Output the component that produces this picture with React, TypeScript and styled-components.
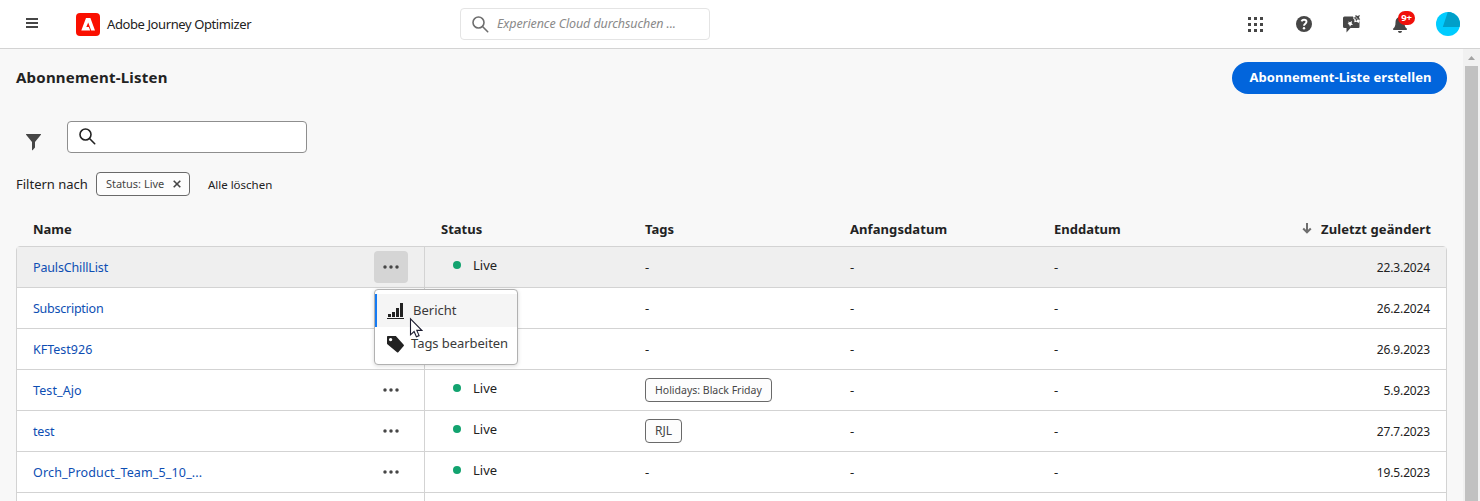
import React from 'react';
import styled, { createGlobalStyle } from 'styled-components';

const GlobalStyle = createGlobalStyle`
  *, *::before, *::after { box-sizing: border-box; }
  body {
    margin: 0;
    overflow: hidden;
    background: #f8f8f8;
    color: #222;
    font-family: "Noto Sans", "Open Sans", sans-serif;
    font-size: 13px;
  }
  button, input { font: inherit; color: inherit; }
  svg { display: block; flex: none; }
`;

const Page = styled.div`
  height: 501px;
  display: flex;
  flex-direction: column;
  overflow: hidden;
`;

const Label = styled.span<{ $ls?: number }>`
  white-space: nowrap;
  letter-spacing: ${(p) => p.$ls ?? 0}px;
`;

/* Top bar */
const TopBar = styled.header`
  flex: none;
  height: 49px;
  display: flex;
  align-items: center;
  background: #fff;
  border-bottom: 1px solid #d3d3d3;
`;

const Brand = styled.div`
  width: 460px;
  display: flex;
  align-items: center;
  padding-left: 26px;
`;

const MenuGlyph = styled.svg`
  margin-bottom: 2px;
`;

const Logo = styled.span`
  margin: 0 7px 0 38px;
`;

const GlobalSearch = styled.label`
  width: 250px;
  height: 32px;
  display: flex;
  align-items: center;
  gap: 8px;
  padding-left: 11px;
  border: 1px solid #e4e4e4;
  border-radius: 4px;
  color: #6e6e6e;
`;

const Placeholder = styled(Label)`
  font-size: 12.5px;
  font-style: italic;
  color: #8a8a8a;
  padding-bottom: 1px;
`;

const Actions = styled.nav`
  margin-left: auto;
  padding-right: 20px;
  display: flex;
  align-items: center;
  color: #464646;
`;

const Action = styled.span<{ $gap: number }>`
  position: relative;
  margin-left: ${(p) => p.$gap}px;
`;

const Badge = styled.span`
  position: absolute;
  left: 5px;
  top: -5px;
  width: 17px;
  height: 14px;
  border-radius: 7px;
  background: #f00f0a;
  color: #fff;
  font-size: 9.5px;
  font-weight: 700;
  line-height: 14px;
  letter-spacing: -0.2px;
  text-align: center;
`;

/* Content */
const Body = styled.div`
  flex: 1;
  min-height: 0;
  display: flex;
`;

const Main = styled.main`
  flex: 1;
  min-width: 0;
  padding: 13px 16px 0;
`;

const Heading = styled.div`
  height: 32px;
  display: flex;
  align-items: center;
  justify-content: space-between;
`;

const Title = styled.h1`
  margin: 0;
  padding-bottom: 2px;
  font-size: 15px;
  font-weight: 700;
  letter-spacing: 0.22px;
`;

const PrimaryButton = styled.button`
  width: 215px;
  height: 32px;
  padding: 0 0 2px 2px;
  border: 0;
  border-radius: 16px;
  background: #0265dc;
  color: #fff;
  font-weight: 700;
  letter-spacing: 0.05px;
`;

const SearchRow = styled.div`
  margin-top: 27px;
  height: 32px;
  display: flex;
  align-items: center;
  padding-left: 10px;
`;

const FilterButton = styled.span`
  margin: 10px 26px 0 0;
  color: #464646;
`;

const SearchField = styled.label`
  width: 240px;
  height: 32px;
  padding: 6px 0 0 11px;
  border: 1px solid #8e8e8e;
  border-radius: 4px;
  background: #fff;
`;

const FilterRow = styled.div`
  margin-top: 19px;
  height: 24px;
  display: flex;
  align-items: center;
`;

const Tag = styled.span<{ $size: number }>`
  display: inline-flex;
  align-items: center;
  height: 24px;
  padding: 0 9px 1px;
  border: 1px solid #6a6a6a;
  border-radius: 4px;
  background: #fdfdfd;
  color: #464646;
  font-size: ${(p) => p.$size}px;
`;

const FilterTag = styled(Tag)`
  width: 94px;
  justify-content: space-between;
  padding-right: 8px;
  margin: 0 18px 0 8px;
`;

const ClearAll = styled(Label)`
  font-size: 11.5px;
  padding-top: 1px;
`;

/* Table */
const columns = '408px 204px 205px 204px 1fr';

const HeaderRow = styled.div`
  margin-top: 16px;
  height: 34px;
  display: grid;
  grid-template-columns: ${columns};
  align-items: center;
  font-weight: 700;
`;

const HeaderCell = styled.div`
  padding-left: 17px;
`;

const HeaderTail = styled.div`
  display: flex;
  align-items: center;
  justify-content: space-between;
  padding: 0 16px 0 17px;
`;

const Sorted = styled.span`
  display: flex;
  align-items: center;
  gap: 9px;
`;

const SortArrow = styled.svg`
  margin-bottom: 2px;
`;

const Table = styled.div`
  border: 1px solid #d3d3d3;
  border-radius: 4px 4px 0 0;
  background: #fff;
`;

const Row = styled.div<{ $active?: boolean }>`
  height: 41px;
  display: grid;
  grid-template-columns: ${columns};
  border-bottom: 1px solid #d3d3d3;
  background: ${(p) => (p.$active ? '#efefef' : 'transparent')};
`;

const Cell = styled.div`
  min-width: 0;
  display: flex;
  align-items: center;
  padding-left: 16px;
`;

const NameCell = styled(Cell)`
  position: relative;
  justify-content: space-between;
  border-right: 1px solid #d3d3d3;
  padding-right: 16px;
  color: #0d4eb3;
  font-size: 12.5px;
`;

const MoreButton = styled.span<{ $active?: boolean }>`
  width: 34px;
  height: 32px;
  display: grid;
  place-items: center;
  border-radius: 4px;
  background: ${(p) => (p.$active ? '#d5d5d5' : 'transparent')};
  color: #464646;
`;

const StatusCell = styled(Cell)`
  gap: 12px;
  padding: 0 0 4px 28px;
`;

const Dot = styled.span`
  width: 8px;
  height: 8px;
  border-radius: 50%;
  background: #12a36f;
`;

const LastCell = styled(Cell)`
  justify-content: space-between;
  padding-right: 16px;
`;

const DateText = styled(Label)`
  font-size: 12px;
`;

/* Context menu */
const Menu = styled.div`
  position: absolute;
  z-index: 2;
  left: 357px;
  top: 42px;
  width: 144px;
  height: 76px;
  padding-top: 4px;
  border: 1px solid #b1b1b1;
  border-radius: 4px;
  background: #fff;
  box-shadow: 0 1px 4px rgba(0, 0, 0, 0.15);
  color: #3a3a3a;
  font-size: 13px;
`;

const MenuItem = styled.div<{ $active?: boolean }>`
  height: 33px;
  display: flex;
  align-items: center;
  gap: ${(p) => (p.$active ? 9 : 6)}px;
  padding: 0 0 2px 10px;
  border-left: 2px solid ${(p) => (p.$active ? '#147af3' : 'transparent')};
  background: ${(p) => (p.$active ? '#f5f5f5' : 'transparent')};
  svg { color: #222; margin-top: 4px; }
`;

const Pointer = styled.svg`
  position: absolute;
  z-index: 3;
  left: 34px;
  top: 27px;
`;

/* Scrollbar */
const ScrollTrack = styled.div`
  flex: none;
  width: 17px;
  display: flex;
  flex-direction: column;
  align-items: center;
  background: #f1f1f1;
`;

const ScrollArrow = styled.span`
  height: 17px;
  padding-top: 7px;
  color: #a3a3a3;
`;

const ScrollThumb = styled.div`
  flex: 1;
  width: 13px;
  background: #c1c1c1;
`;

const Magnifier = () => (
  <svg width="17" height="17" viewBox="0 0 17 17" fill="none" stroke="currentColor" strokeWidth="1.6">
    <circle cx="6.5" cy="6.5" r="5.5" />
    <path d="M10.5 10.5l5.200 5.200" strokeLinecap="round" />
  </svg>
);

const MoreIcon = () => (
  <svg width="16" height="4" viewBox="0 0 16 4" fill="currentColor">
    <circle cx="2" cy="2" r="1.750" />
    <circle cx="8" cy="2" r="1.750" />
    <circle cx="14" cy="2" r="1.750" />
  </svg>
);

type RowData = { name: string; ls: number; date: string; tag?: string; tagSize?: number; covered?: boolean };

const rows: RowData[] = [
  { name: 'PaulsChillList', ls: -0.15, date: '22.3.2024' },
  { name: 'Subscription', ls: -0.25, date: '26.2.2024', covered: true },
  { name: 'KFTest926', ls: 0, date: '26.9.2023', covered: true },
  { name: 'Test_Ajo', ls: 0.1, date: '5.9.2023', tag: 'Holidays: Black Friday', tagSize: 10.5 },
  { name: 'test', ls: -0.2, date: '27.7.2023', tag: 'RJL', tagSize: 12 },
  { name: 'Orch_Product_Team_5_10_...', ls: 0.15, date: '19.5.2023' },
];

const ActionMenu = () => (
  <Menu>
    <MenuItem $active>
      <svg width="17" height="17" viewBox="0 0 17 17" fill="currentColor">
        <path d="M1 11h3v3H1zM5 9h3v5H5zM9 5h3v9H9zM13 0h3v14h-3zM0 15h17v1H0z" />
      </svg>
      <Label>Bericht</Label>
    </MenuItem>
    <MenuItem>
      <svg width="18" height="18" viewBox="0 0 18 18" fill="currentColor">
        <path
          fillRule="evenodd"
          d="M1 0h7.300c.4 0 .7.100 1 .4l7.400 8.400c.4.400.4.900 0 1.300l-5.400 6.200c-.4.400-.9.400-1.300 0L.7 8.500C.200 8.200 0 7.900 0 7.500V1C0 .4.400 0 1 0zM3.600 1.900a1.700 1.700 0 1 0 0 3.400 1.700 1.700 0 0 0 0-3.400z"
        />
      </svg>
      <Label $ls={-0.05}>Tags bearbeiten</Label>
    </MenuItem>
    <Pointer width="14" height="22" viewBox="0 0 14 22">
      <path d="M1.500 1.800v16l3.600-3.300 2.300 5.300 2.700-1.200-2.300-5.200h5z" fill="#fff" stroke="#1c1c30" strokeWidth="1.100" />
    </Pointer>
  </Menu>
);

export default function App() {
  return (
    <Page>
      <GlobalStyle />
      <TopBar>
        <Brand>
          <MenuGlyph width="12" height="10" viewBox="0 0 12 10" fill="#464646">
            <path d="M0 0h12v2H0zM0 4h12v2H0zM0 8h12v2H0z" />
          </MenuGlyph>
          <Logo>
            <svg width="24" height="23" viewBox="0 0 24 23">
              <rect width="24" height="23" rx="4" fill="#fa0f00" />
              <path d="M10 5h4.400L19 17.500h-3.800L12.200 9.500l-1.900 4.500h2.500l1.400 3.500H5.300z" fill="#fff" />
            </svg>
          </Logo>
          <Label $ls={-0.4}>Adobe Journey Optimizer</Label>
        </Brand>
        <GlobalSearch>
          <Magnifier />
          <Placeholder $ls={-0.1}>Experience Cloud durchsuchen ...</Placeholder>
        </GlobalSearch>
        <Actions>
          <Action $gap={0}>
            <svg width="15" height="15" viewBox="0 0 15 15" fill="currentColor">
              <path d="M0 0h3v3H0zM6 0h3v3H6zM12 0h3v3h-3zM0 6h3v3H0zM6 6h3v3H6zM12 6h3v3h-3zM0 12h3v3H0zM6 12h3v3H6zM12 12h3v3h-3z" />
            </svg>
          </Action>
          <Action $gap={33}>
            <svg width="16" height="16" viewBox="0 0 16 16" fill="none">
              <circle cx="8" cy="8" r="8" fill="currentColor" />
              <path d="M5.500 5.400C6 4.200 6.900 3.700 8 3.700c1.500 0 2.500.8 2.500 2.100C10.500 7.600 8 7.700 8 9.700" stroke="#fff" strokeWidth="1.900" />
              <circle cx="8" cy="12.200" r="1.200" fill="#fff" />
            </svg>
          </Action>
          <Action $gap={31}>
            <svg width="18" height="18" viewBox="0 0 18 18">
              <path d="M1.500 1.500H10l1 3 4-1 1.500 2v6.500a1 1 0 0 1-1 1H7.500L3.500 17.500V13h-2A1.500 1.500 0 0 1 0 11.500V3A1.500 1.500 0 0 1 1.500 1.500z" fill="currentColor" />
              <path d="M5 6.500l2 .7L9 6l-.4 2.200L10 9.800l-2 .3-1 1.700-.7-2L4.600 8.800l1.200-.8z" fill="#fff" />
              <path d="M10 3.500l1.500 1-.2 2.800 2.500-.6 1.700 1.200 1.300-2-1-2.500 1.700-2.400-3 .6L13 0l-.4 2.200z" fill="#fff" />
              <path d="M17 0l-1 2.600 1.200 2.200-2.600-.3L13 6.300l-.6-2.500L10.200 3l2.200-1.100.1-2L14.400.9z" fill="currentColor" />
              <path d="M12.600 2.200l2 1.800" stroke="#fff" strokeWidth=".8" />
            </svg>
          </Action>
          <Action $gap={32}>
            <svg width="14" height="17" viewBox="0 0 14 17" fill="currentColor">
              <path d="M7 0c-.8 0-1.300.6-1.300 1.300C3.400 2 2.500 4 2.500 6.500c0 3.500-.8 4.700-2 5.800-.4.400-.5.500-.5.900 0 .5.300.8.800.8h12.400c.5 0 .8-.3.800-.8 0-.4-.1-.5-.5-.9-1.200-1.100-2-2.300-2-5.800C11.500 4 10.600 2 8.300 1.300 8.300.6 7.800 0 7 0zM5 15h4c0 1.200-.9 2-2 2s-2-.8-2-2z" />
            </svg>
            <Badge>9+</Badge>
          </Action>
          <Action $gap={29}>
            <svg width="24" height="24" viewBox="0 0 24 24">
              <circle cx="12" cy="12" r="12" fill="#00ccff" />
              <path d="M11.800 0A12 12 0 0 1 23.600 15H6.800z" fill="#009fc9" />
            </svg>
          </Action>
        </Actions>
      </TopBar>

      <Body>
        <Main>
          <Heading>
            <Title>Abonnement-Listen</Title>
            <PrimaryButton>Abonnement-Liste erstellen</PrimaryButton>
          </Heading>
          <SearchRow>
            <FilterButton>
              <svg width="15" height="17" viewBox="0 0 15 17" fill="currentColor">
                <path d="M.4 0h14.200c.4 0 .5.400.3.700L9 8v5.600l-2.400 2.600c-.3.300-.6.100-.6-.2V8L.1.700C-.1.400 0 0 .4 0z" />
              </svg>
            </FilterButton>
            <SearchField>
              <Magnifier />
            </SearchField>
          </SearchRow>
          <FilterRow>
            <Label>Filtern nach</Label>
            <FilterTag $size={11}>
              <Label>Status: Live</Label>
              <svg width="8" height="8" viewBox="0 0 8 8" stroke="#464646" strokeWidth="1.600">
                <path d="M.7.7l6.600 6.600M7.300.7L.7 7.300" />
              </svg>
            </FilterTag>
            <ClearAll>Alle löschen</ClearAll>
          </FilterRow>

          <HeaderRow>
            <HeaderCell>Name</HeaderCell>
            <HeaderCell>Status</HeaderCell>
            <HeaderCell>Tags</HeaderCell>
            <HeaderCell>
              <Label $ls={0.08}>Anfangsdatum</Label>
            </HeaderCell>
            <HeaderTail>
              <span>Enddatum</span>
              <Sorted>
                <SortArrow width="10" height="11" viewBox="0 0 10 11" fill="none" stroke="#6e6e6e" strokeWidth="2">
                  <path d="M5 0v9M1.200 5.500L5 9.300l3.800-3.800" />
                </SortArrow>
                <Label $ls={0.1}>Zuletzt geändert</Label>
              </Sorted>
            </HeaderTail>
          </HeaderRow>
          <Table>
            {rows.map((row, i) => (
              <Row key={row.name} $active={i === 0}>
                <NameCell>
                  <Label $ls={row.ls}>{row.name}</Label>
                  {!row.covered && (
                    <MoreButton $active={i === 0}>
                      <MoreIcon />
                    </MoreButton>
                  )}
                  {i === 0 && <ActionMenu />}
                </NameCell>
                <StatusCell>
                  {!row.covered && (
                    <>
                      <Dot />
                      <Label>Live</Label>
                    </>
                  )}
                </StatusCell>
                <Cell>{row.tag ? <Tag $size={row.tagSize ?? 11}>{row.tag}</Tag> : '-'}</Cell>
                <Cell>-</Cell>
                <LastCell>
                  <span>-</span>
                  <DateText $ls={-0.15}>{row.date}</DateText>
                </LastCell>
              </Row>
            ))}
            <Row>
              <NameCell />
            </Row>
          </Table>
        </Main>
        <ScrollTrack>
          <ScrollArrow>
            <svg width="7" height="4" viewBox="0 0 7 4" fill="currentColor">
              <path d="M3.500 0L7 4H0z" />
            </svg>
          </ScrollArrow>
          <ScrollThumb />
        </ScrollTrack>
      </Body>
    </Page>
  );
}
